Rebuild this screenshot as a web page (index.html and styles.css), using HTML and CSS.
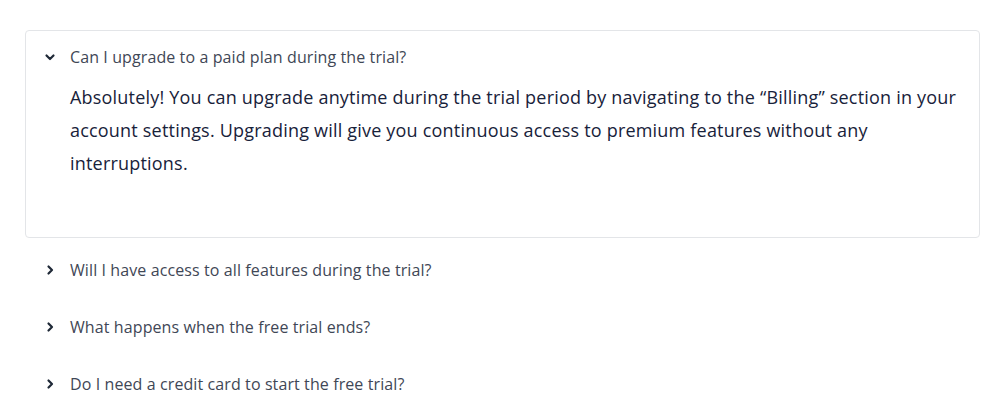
FILE: index.html
```html
<!DOCTYPE html>
<html lang="en">
<head>
<meta charset="UTF-8">
<meta name="viewport" content="width=device-width, initial-scale=1.0">
<title>FAQ</title>
<link rel="stylesheet" href="styles.css">
</head>
<body>
<div class="faq-list">
    <div class="faq-item open">
        <div class="faq-question">
            <svg class="chevron" viewBox="0 0 12 12" width="12" height="12"><path d="M2.5 4.5 L6 8 L9.5 4.5" /></svg>
            <span>Can I upgrade to a paid plan during the trial?</span>
        </div>
        <div class="faq-answer">
            Absolutely! You can upgrade anytime during the trial period by navigating to the “Billing” section in your account settings. Upgrading will give you continuous access to premium features without any interruptions.
        </div>
    </div>
    <div class="faq-item">
        <div class="faq-question">
            <svg class="chevron" viewBox="0 0 12 12" width="12" height="12"><path d="M4.5 2.5 L8 6 L4.5 9.5" /></svg>
            <span>Will I have access to all features during the trial?</span>
        </div>
    </div>
    <div class="faq-item">
        <div class="faq-question">
            <svg class="chevron" viewBox="0 0 12 12" width="12" height="12"><path d="M4.5 2.5 L8 6 L4.5 9.5" /></svg>
            <span>What happens when the free trial ends?</span>
        </div>
    </div>
    <div class="faq-item">
        <div class="faq-question">
            <svg class="chevron" viewBox="0 0 12 12" width="12" height="12"><path d="M4.5 2.5 L8 6 L4.5 9.5" /></svg>
            <span>Do I need a credit card to start the free trial?</span>
        </div>
    </div>
</div>
</body>
</html>
```
FILE: styles.css
```css
body, html {
    margin: 0;
    background: #ffffff;
    font-family: "Open Sans", "Noto Sans", sans-serif;
}
.faq-list {
    display: flex;
    flex-direction: column;
    gap: 5px;
    padding: 30px 19px 0 25px;
}
.faq-item {
    border: 1px solid transparent;
    border-radius: 4px;
}
.faq-item.open {
    border-color: #e3e5e8;
}
.faq-question {
    display: flex;
    align-items: center;
    gap: 14px;
    padding: 14px 20px 12px 18px;
    font-size: 16px;
    line-height: 24px;
    letter-spacing: 0.1px;
    color: #3f4756;
}
.chevron {
    fill: none;
    stroke: #1f2937;
    stroke-width: 2.2;
    stroke-linecap: round;
    stroke-linejoin: round;
}
.faq-answer {
    padding: 0 16px 57px 44px;
    font-size: 18px;
    line-height: 33px;
    letter-spacing: 0.2px;
    color: #18223a;
}
```
